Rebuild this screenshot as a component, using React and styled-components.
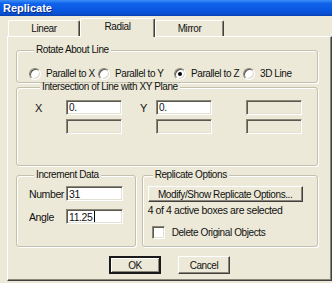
import React from 'react';
import styled, { createGlobalStyle, css } from 'styled-components';

const GlobalStyle = createGlobalStyle`
	html, body {
		margin: 0;
		padding: 0;
		background: #ece9d8;
	}
	* {
		box-sizing: border-box;
	}
`;

const sunken = css`
	border: 1px solid;
	border-color: #8a8778 #fff #fff #8a8778;
	box-shadow: inset 1px 1px 0 #5a584f, inset -1px -1px 0 #e4e1d2;
`;

const App = () => {
	return (
		<>
			<GlobalStyle />
			<Window>
				<TitleBar>
					<Title>Replicate</Title>
				</TitleBar>
				<Client>
					<Tabs>
						<Tab $w={72}>Linear</Tab>
						<Tab $w={75} $active>
							Radial
						</Tab>
						<Tab $w={69}>Mirror</Tab>
					</Tabs>
					<Panel>
						<Group $pt={13} $pb={2} $pl={12}>
							<Legend>Rotate About Line</Legend>
							<RadioRow>
								<RadioItem>
									<Radio />
									<span>Parallel to X</span>
								</RadioItem>
								<RadioItem>
									<Radio />
									<span>Parallel to Y</span>
								</RadioItem>
								<RadioItem>
									<Radio $checked />
									<span>Parallel to Z</span>
								</RadioItem>
								<RadioItem>
									<Radio />
									<span>3D Line</span>
								</RadioItem>
							</RadioRow>
						</Group>

						<Group $pt={9} $pb={31} $pl={18}>
							<Legend>Intersection of Line with XY Plane</Legend>
							<PlaneGrid>
								<AxisLabel>X</AxisLabel>
								<Field>0.</Field>
								<AxisLabel $pad={18}>Y</AxisLabel>
								<Field>0.</Field>
								<span />
								<Field disabled />
								<span />
								<Field disabled />
								<span />
								<Field disabled />
								<span />
								<Field disabled />
							</PlaneGrid>
						</Group>

						<BottomRow>
							<Group $pt={7} $pb={0} $pl={12} $w={120}>
								<Legend>Increment Data</Legend>
								<IncrementGrid>
									<span>Number</span>
									<Field $w={57}>31</Field>
									<span>Angle</span>
									<Field $w={57}>
										11.25
										<Caret />
									</Field>
								</IncrementGrid>
							</Group>
							<Group $pt={7} $pb={0} $pl={5} $w={177}>
								<Legend>Replicate Options</Legend>
								<PushButton $w={155} $h={16}>
									Modify/Show Replicate Options...
								</PushButton>
								<Note>4 of 4 active boxes are selected</Note>
								<CheckRow>
									<CheckBox />
									<span>Delete Original Objects</span>
								</CheckRow>
							</Group>
						</BottomRow>

						<ButtonRow>
							<PushButton $w={52} $h={18} $default>
								OK
							</PushButton>
							<PushButton $w={52} $h={18}>
								Cancel
							</PushButton>
						</ButtonRow>
					</Panel>
				</Client>
			</Window>
		</>
	);
};

export default App;

const Window = styled.div`
	width: 332px;
	height: 283px;
	overflow: hidden;
	background: #ece9d8;
	display: flex;
	flex-direction: column;
	font-family: 'Liberation Sans', Arial, sans-serif;
	font-size: 10px;
	letter-spacing: -0.4px;
	color: #111;
`;

const TitleBar = styled.div`
	height: 16px;
	flex: none;
	display: flex;
	align-items: center;
	padding-left: 3px;
	background: linear-gradient(
		to bottom,
		#3c8ef8 0%,
		#0f63ea 22%,
		#0a58e2 60%,
		#0a50d4 85%,
		#0640b0 100%
	);
`;

const Title = styled.span`
	color: #fff;
	font-weight: bold;
	font-size: 11px;
	letter-spacing: 0;
	text-shadow: 1px 1px 0 #0a2a84;
`;

const Client = styled.div`
	flex: 1;
	display: flex;
	flex-direction: column;
	padding-left: 7px;
`;

const Tabs = styled.div`
	height: 20px;
	flex: none;
	display: flex;
	align-items: flex-end;
	padding-left: 1px;
`;

const Tab = styled.div`
	width: ${(p) => p.$w}px;
	height: ${(p) => (p.$active ? 19 : 16)}px;
	margin-bottom: ${(p) => (p.$active ? -1 : 0)}px;
	position: relative;
	z-index: ${(p) => (p.$active ? 1 : 0)};
	display: flex;
	align-items: center;
	justify-content: center;
	padding-bottom: ${(p) => (p.$active ? 3 : 0)}px;
	background: #ece9d8;
	border-top: 1px solid #fff;
	border-left: 1px solid #fff;
	border-right: 1px solid #404040;
	box-shadow: inset -1px 0 0 #8a8778;
	border-radius: 2px 2px 0 0;
`;

const Panel = styled.div`
	height: 245px;
	display: flex;
	flex-direction: column;
	padding: 9px 13px 0 8px;
	border-top: 1px solid #fff;
	border-left: 1px solid #fff;
	border-right: 1px solid #404040;
	border-bottom: 1px solid #404040;
	box-shadow: inset -1px -1px 0 #8a8778;
`;

const Group = styled.fieldset`
	margin: 0;
	min-width: 0;
	width: ${(p) => (p.$w ? `${p.$w}px` : 'auto')};
	padding: ${(p) => p.$pt}px 4px ${(p) => p.$pb}px ${(p) => p.$pl}px;
	border: 1px solid #c3c0b0;
	border-radius: 3px;
	box-shadow: inset 1px 1px 0 #fff, 1px 1px 0 #fff;
`;

const Legend = styled.legend`
	margin-left: 5px;
	padding: 0 2px;
	line-height: 8px;
	background: #ece9d8;
`;

const RadioRow = styled.div`
	display: grid;
	grid-template-columns: 69px 76px 69px auto;
	height: 13px;
	align-items: center;
`;

const RadioItem = styled.label`
	display: flex;
	align-items: center;
	gap: 5px;
	white-space: nowrap;
`;

const Radio = styled.span`
	width: 12px;
	height: 12px;
	flex: none;
	border-radius: 50%;
	background: #fff;
	border: 1px solid;
	border-color: #8a8778 #fff #fff #8a8778;
	box-shadow: inset 1px 1px 0 #5a584f, inset -1px -1px 0 #d8d5c6;
	display: flex;
	align-items: center;
	justify-content: center;
	&::after {
		content: '';
		width: 4px;
		height: 4px;
		border-radius: 50%;
		background: ${(p) => (p.$checked ? '#000' : 'transparent')};
	}
`;

const PlaneGrid = styled.div`
	display: grid;
	grid-template-columns: 31px 56px 34px 56px 34px 56px;
	grid-auto-rows: 15px;
	row-gap: 4px;
	align-items: center;
`;

const AxisLabel = styled.span`
	padding-left: ${(p) => p.$pad || 0}px;
	font-size: 11px;
`;

const Field = styled.div`
	${sunken};
	width: ${(p) => (p.$w ? `${p.$w}px` : 'auto')};
	height: 15px;
	padding: 0 2px;
	display: flex;
	align-items: center;
	background: ${(p) => (p.disabled ? '#ece9d8' : '#fff')};
	white-space: nowrap;
`;

const Caret = styled.span`
	width: 1px;
	height: 11px;
	margin-left: 1px;
	background: #000;
`;

const BottomRow = styled.div`
	display: flex;
	gap: 6px;
	margin-top: 5px;
	height: 76px;
`;

const IncrementGrid = styled.div`
	display: grid;
	grid-template-columns: 37px 57px;
	grid-auto-rows: 15px;
	row-gap: 8px;
	align-items: center;
	font-size: 10.5px;
`;

const PushButton = styled.div`
	width: ${(p) => p.$w}px;
	height: ${(p) => p.$h}px;
	flex: none;
	display: flex;
	align-items: center;
	justify-content: center;
	background: #ece9d8;
	border: 1px solid;
	border-color: #fff #404040 #404040 #fff;
	box-shadow: inset -1px -1px 0 #8a8778;
	white-space: nowrap;
	${(p) =>
		p.$default &&
		css`
			border: 2px solid #1a1a1a;
			box-shadow: inset 1px 1px 0 #fff, inset -1px -1px 0 #8a8778;
		`}
`;

const Note = styled.div`
	margin-top: 2px;
	line-height: 12px;
	white-space: nowrap;
	font-size: 10.5px;
`;

const CheckRow = styled.label`
	margin-top: 10px;
	margin-left: 4px;
	display: flex;
	align-items: center;
	gap: 7px;
	white-space: nowrap;
`;

const CheckBox = styled.span`
	${sunken};
	width: 13px;
	height: 13px;
	flex: none;
	background: #fff;
`;

const ButtonRow = styled.div`
	display: flex;
	justify-content: center;
	gap: 17px;
	margin-top: 9px;
	padding-left: 5px;
`;
